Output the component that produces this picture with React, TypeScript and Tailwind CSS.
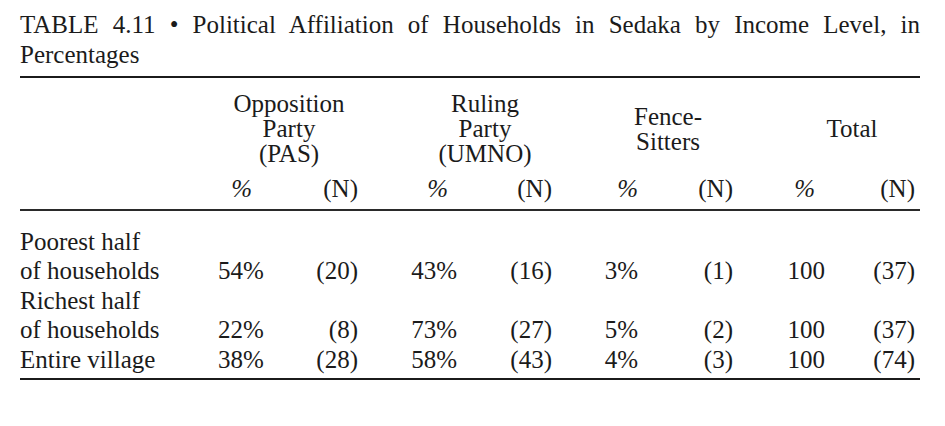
const rows = [
  { label: ["Poorest half", "of households"], v: ["54%", "(20)", "43%", "(16)", "3%", "(1)", "100", "(37)"] },
  { label: ["Richest half", "of households"], v: ["22%", "(8)", "73%", "(27)", "5%", "(2)", "100", "(37)"] },
  { label: ["Entire village"], v: ["38%", "(28)", "58%", "(43)", "4%", "(3)", "100", "(74)"] },
];

// column grid: label | % | (N) | % | (N) | % | (N) | % | (N) | spacer
const cols = "grid grid-cols-[198px_44px_96px_99px_95px_86px_95px_92px_90px_5px]";

export default function App() {
  return (
    <div className="w-[945px] h-[426px] bg-white text-[#1b1b1b] font-['Liberation_Serif',serif] text-[25px]">
      <div className="w-[900px] ml-[20px] pt-[10px]">
        {/* Caption */}
        <div className="leading-[30px]">
          <p className="text-justify [text-align-last:justify]">
            TABLE 4.11 • Political Affiliation of Households in Sedaka by Income Level, in
          </p>
          <p>Percentages</p>
        </div>

        <div className="mt-[6px] border-t-2 border-[#1b1b1b]" />

        {/* Column heads */}
        <div className={`${cols} leading-[25px] pt-[13px]`}>
          <div />
          <div className="col-span-2 flex flex-col items-center pl-[2px]">
            <span>Opposition</span>
            <span>Party</span>
            <span>(PAS)</span>
          </div>
          <div className="col-span-2 flex flex-col items-center pl-[60px]">
            <span>Ruling</span>
            <span>Party</span>
            <span>(UMNO)</span>
          </div>
          <div className="col-span-2 flex flex-col items-center justify-center pl-[51px]">
            <span>Fence-</span>
            <span>Sitters</span>
          </div>
          <div className="col-span-2 flex items-center justify-center pl-[56px]">Total</div>
          <div />

          <div className="pt-[10px]" />
          <div className="pt-[10px] text-right pr-[10px] italic">%</div>
          <div className="pt-[10px] text-right">(N)</div>
          <div className="pt-[10px] text-right pr-[9px] italic">%</div>
          <div className="pt-[10px] text-right">(N)</div>
          <div className="pt-[10px] text-right italic">%</div>
          <div className="pt-[10px] text-right">(N)</div>
          <div className="pt-[10px] text-right pr-[10px] italic">%</div>
          <div className="pt-[10px] text-right">(N)</div>
          <div />
        </div>

        <div className="mt-[8px] border-t-2 border-[#2a2a2a]" />

        {/* Body */}
        <div className="pt-[16px] pb-[4px] flex flex-col gap-[1px] leading-[29px]">
          {rows.map((r) => (
            <div key={r.label.join(" ")} className={`${cols} items-end`}>
              <div className="flex flex-col">
                {r.label.map((l) => (
                  <span key={l} className="whitespace-nowrap">{l}</span>
                ))}
              </div>
              {r.v.map((v, i) => (
                <div key={i} className="text-right whitespace-nowrap">{v}</div>
              ))}
              <div />
            </div>
          ))}
        </div>

        <div className="border-t-2 border-[#1b1b1b]" />
      </div>
    </div>
  );
}
